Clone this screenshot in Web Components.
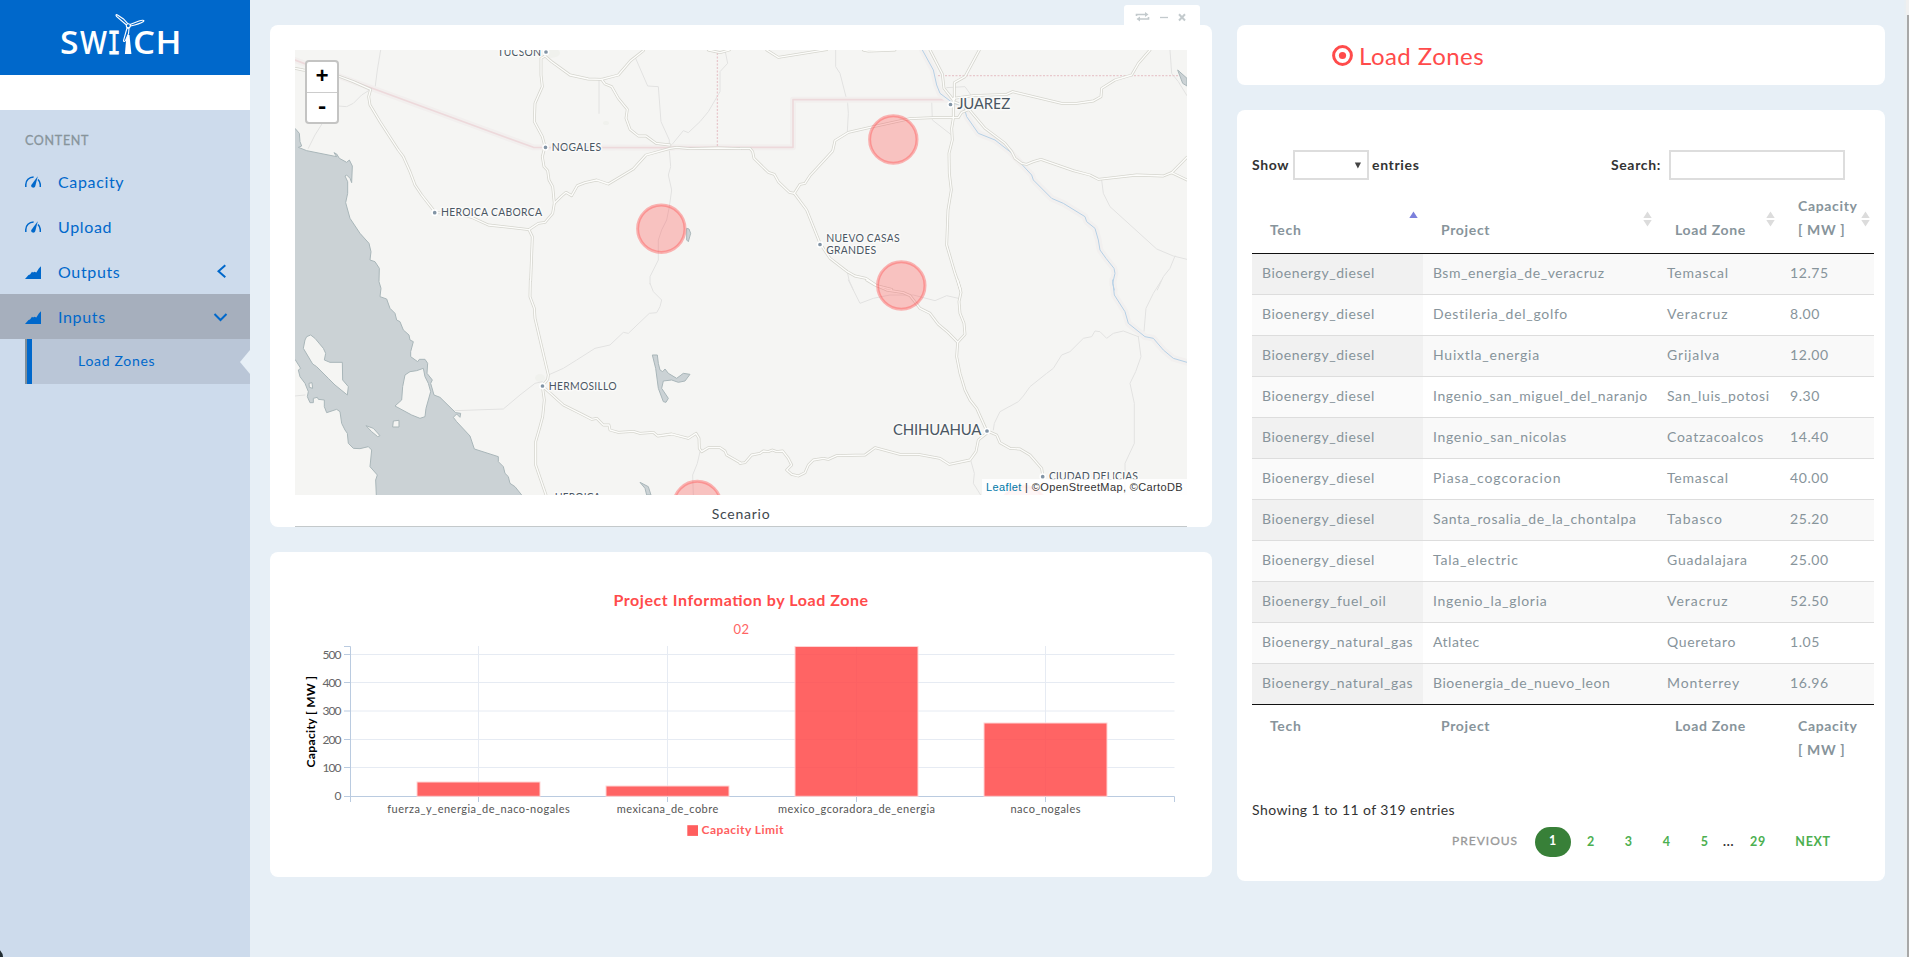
<!DOCTYPE html>
<html lang="en">
<head>
<meta charset="utf-8">
<title>Switch - Load Zones</title>
<style>
html,body{margin:0;height:100%;overflow:hidden}
body{background:#e7eff6;font-family:Lato,"Liberation Sans",sans-serif;font-size:14px;letter-spacing:.65px;color:#333b41}
</style>
</head>
<body>
<app-shell>
  <side-bar slot="side">
    <nav-item icon="gauge">Capacity</nav-item>
    <nav-item icon="gauge">Upload</nav-item>
    <nav-item icon="area" arrow="left">Outputs</nav-item>
    <nav-item icon="area" arrow="down" open>Inputs</nav-item>
    <sub-item>Load Zones</sub-item>
  </side-bar>
  <ui-card slot="left" style="height:502px"><card-tools slot="tools"></card-tools><zone-map></zone-map></ui-card>
  <ui-card slot="left" style="height:325px"><capacity-chart></capacity-chart></ui-card>
  <ui-card slot="right" style="height:60px"><page-title>Load Zones</page-title></ui-card>
  <ui-card slot="right" style="height:771px"><project-table></project-table></ui-card>
</app-shell>
<script>
function define(name, html, setup) {
  const t = document.createElement('template');
  t.innerHTML = html;
  customElements.define(name, class extends HTMLElement {
    connectedCallback() {
      if (this.shadowRoot) return;
      this.attachShadow({mode: 'open'}).appendChild(t.content.cloneNode(true));
      if (setup) setup(this, this.shadowRoot);
    }
  });
}

define('app-shell', `<style>
:host{display:grid;grid-template-columns:250px 942px 648px;height:957px;position:relative;overflow:hidden}
.l,.r{display:flex;flex-direction:column;gap:25px;padding-top:25px}
.l{margin-left:20px;width:942px}.r{margin-left:45px;width:648px}
.track{position:absolute;right:0;top:0;width:5px;height:957px;background:#e9eff3;z-index:3}
.track i{position:absolute;right:0;top:15px;width:2px;height:942px;background:#a8a8a8}
.track b{position:absolute;right:0;top:0;width:3px;height:15px;background:#f0f0f0}
.dot{position:absolute;left:-15px;top:948px;width:18px;height:18px;border-radius:9px;background:#222d32;z-index:3}
</style><slot name="side"></slot><div class="l"><slot name="left"></slot></div><div class="r"><slot name="right"></slot></div><div class="track"><i></i><b></b></div><div class="dot"></div>`);

define('side-bar', `<style>
:host{display:flex;flex-direction:column;background:#cddbec;height:957px}
.logo{height:75px;background:#0068cb;flex:none}
.gap{height:35px;background:#fff;flex:none}
.h{height:49px;box-sizing:border-box;padding:22px 0 0 25px;font-size:12.500px;line-height:18px;color:#87949b;letter-spacing:.7px;-webkit-text-stroke:.3px #87949b;flex:none}
svg{display:block}
</style>
<div class="logo"><svg width="250" height="75" viewBox="0 0 250 75" fill="#fff" font-weight="600" letter-spacing="0" font-family="'Open Sans',sans-serif" font-size="32">
<text x="60" y="54" textLength="18.500" lengthAdjust="spacingAndGlyphs">S</text>
<text x="80" y="54" textLength="27" lengthAdjust="spacingAndGlyphs">W</text>
<text x="107.500" y="54" font-family="'DejaVu Sans Mono',monospace" font-weight="400" font-size="31.500" stroke="#fff" stroke-width=".8" textLength="13" lengthAdjust="spacingAndGlyphs">I</text>
<text x="133" y="54" textLength="22" lengthAdjust="spacingAndGlyphs">C</text>
<text x="155.500" y="54" textLength="26" lengthAdjust="spacingAndGlyphs">H</text>
<path d="M126.500 35h3l1.900 19h-6.500z"/><path d="M124.500 39.500l2.500-2v3.500z" />
<g fill="#0068cb" stroke="#fff" stroke-width="1.100"><path d="M126.500 25l-10-8.500c-1-1.500-.5-2.500 1-1.500l6 4 4.500 5z"/><path d="M130 24.500l9-3.500c3-1 6-1 4.500.5-3 2-6 3-13 4.500z"/><path d="M127 28l-3.500 12.500c0 1.500 1.500 1 2 0l3-7 .5-5z"/><circle cx="128.300" cy="25.800" r="2"/></g></svg></div>
<div class="gap"></div><div class="h">CONTENT</div><slot></slot>`);

define('nav-item', `<style>
:host{display:flex;align-items:center;height:45px;flex:none;padding:0 22px 0 25px;color:#0068cb;font-size:16px;box-sizing:border-box}
:host([open]){background:#a6afbd}
.i{width:16px;height:16px;margin-right:17px}.t{flex:1;margin-top:-1px;letter-spacing:.65px}
svg{display:block}
</style><svg class="i" viewBox="0 0 16 16"></svg><span class="t"><slot></slot></span><svg class="a" width="15" height="15" fill="none" stroke="#0068cb" stroke-width="2"></svg>`, (h, r) => {
  r.querySelector('.i').innerHTML = h.getAttribute('icon') === 'gauge'
    ? '<path d="M.8 13V10.500C.8 6.500 4 3 8.600 2.900" fill="none" stroke="#0068cb" stroke-width="1.500"/><path d="M13 5.500c1.500 1.500 2.300 3.300 2.300 5.300V13" fill="none" stroke="#0068cb" stroke-width="1.500"/><path d="M12.800 2.300l-2.500 9.700c-.4 1.400-1.400 1.900-2.600 1.600-1.300-.4-1.900-1.500-1.400-2.600z" fill="#0068cb"/>'
    : '<path d="M0 15l3.500-4 1.500-.5 2-2.700 1 .8 1.500-.8 1.800.8 2.700-4.300L16 2.300V15z" fill="#0068cb"/>';
  const a = h.getAttribute('arrow');
  r.querySelector('.a').innerHTML = a === 'left' ? '<path d="M12.300 1.200L5.500 7.300l6.800 6"/>' : a ? '<path d="M1.500 5l6 6 6-6"/>' : '';
});

define('sub-item', `<style>
:host{display:flex;align-items:center;position:relative;height:45px;margin-left:25px;background:#bac6d7;border-left:2px solid #7f8d98;color:#0068cb;font-size:14px;flex:none;box-sizing:border-box}
b{width:5px;height:45px;background:#0068cb;margin-right:46px}
span{letter-spacing:.7px;margin-top:-3px}
i{position:absolute;right:0;top:11px;border:12px solid transparent;border-right:10px solid #e7eff6;border-left:0}
</style><b></b><span><slot></slot></span><i></i>`);

define('ui-card', `<style>
:host{display:block;position:relative;background:#fff;border-radius:8px;flex:none}
</style><slot name="tools"></slot><slot></slot>`);

define('card-tools', `<style>
:host{position:absolute;right:12px;top:-20px;width:76px;height:20px;background:#fff;border-radius:3px 3px 0 0}
svg{display:block}
</style><svg width="76" height="20" fill="none" stroke="#c3cacd" stroke-width="1.600"><path d="M12.500 11V9.500H22M24.500 12v2H15"/><path d="M21 7l3.500 2.500L21 12zM16 11.500L12.500 14l3.500 2.500z" fill="#c3cacd" stroke="none"/><path d="M36 12.500h8" stroke-width="1.300"/><path d="M55 9.300l6 6.200M61 9.300l-6 6.200" stroke-width="2"/></svg>`);

define('page-title', `<style>
:host{display:flex;align-items:center;height:60px;padding-left:95px;color:#ff4b4b;font-size:24px;gap:6px}
span{letter-spacing:.45px}svg{margin-top:2px}
</style><svg width="21" height="22"><circle cx="10.500" cy="10.500" r="8.900" fill="none" stroke="#ff4b4b" stroke-width="3"/><circle cx="10.500" cy="10.500" r="3.600" fill="#ff4b4b"/></svg><span><slot></slot></span>`);

/* Map geometry is kept in four survey sheets, three units to a pixel. */
const SHEETS = {A:[290,40],B:[740,0],C:[290,280],D:[740,280]};
const ROADS = {
A:['15,85 40,90 60,92 100,97 145,108 190,125 242,148 236,170 240,195 270,245 325,330 340,350 360,395 375,435 395,465 434,515','434,518 500,520 545,532 595,555 660,562 717,569','765,48 753,55 753,105 757,140 735,190 733,245 757,290 765,320 757,350 762,380 773,392 777,420 788,440 793,490 788,520 765,547 745,550 717,569 727,590 722,722','765,48 785,65 840,105 895,117 935,118 985,105 1022,62 1060,32','935,118 945,132 965,140 985,175 1012,208 1008,235 1020,268 1045,288 1068,288 1098,310 1140,315','793,490 815,468 828,457 845,467 862,437 885,428 920,420 955,432 1000,405 1030,387 1068,345 1140,325 1160,322 1200,326 1285,324 1352,326','1255,30 1290,38 1318,30'],
B:['0,445 30,445 38,455 42,475 85,517 103,523 115,545 148,577 163,580 180,553 195,550 210,527 278,453 285,422 325,397 400,380 510,356 580,353 655,353 665,337 690,327','163,580 200,630 240,730 270,775 322,815 345,828 378,835 410,857 455,868','80,150 115,172 260,149','370,150 385,153 465,150','570,150 607,222 612,265 640,300','718,150 675,230 643,248 643,300','640,295 700,287 800,283 818,275 880,290 965,310 1010,310 1060,303 1083,290 1085,265 1125,240 1175,225 1195,190 1230,150','640,305 680,320 735,385 795,430 815,455 825,475 845,490 860,493 880,485 903,478 1000,512 1050,525 1075,538 1190,525 1270,528 1295,518 1341,540','1295,518 1341,472','640,300 640,355 635,385 637,420 627,460 628,520 634,570 624,630 620,735 645,820 662,870'],
C:['721,0 720,50 733,85 735,115 775,285 773,298 757,318 763,360 758,410 750,440 737,485 737,555 768,645','757,318 820,375 870,400 905,418 920,415 940,435 957,435 960,450 985,457 1030,454 1050,460 1090,457 1103,468 1145,462 1195,475 1218,460 1227,475 1228,505 1235,515 1255,503 1290,503 1305,513 1310,525 1345,545 1352,549'],
D:['380,0 405,15 440,30 490,38 510,47 540,85 570,100 595,133 625,158 653,187','653,0 663,37 657,65 660,100 672,130 675,163 653,187 650,230 660,280 675,330 690,360 710,385 740,452','740,452 770,465 780,488 810,505 840,507 870,525 905,565 908,585','0,550 15,548 35,525 60,520 70,513 85,515 97,510 110,515 128,513 145,535 155,555 140,570 155,583 175,588 195,578 205,555 220,540 250,535 265,538 290,527 375,525 405,503 480,523 535,523 600,535 628,553 690,540 708,515 715,480 740,460']};
const MINOR = {
A:['272,30 262,90 255,145','242,148 215,165 190,190 170,200 145,198','97,250 75,285 55,325','927,120 927,220','1037,55 1073,138 1105,140 1113,245 1138,300 1138,330 1142,380 1135,405 1145,450 1138,500 1130,540 1115,570 1105,600 1105,660 1080,710 1080,732','1145,315 1180,272 1195,278 1230,245 1255,215 1290,155 1290,95 1313,70 1305,30'],
B:['287,150 287,200 300,220 323,310 325,340 322,395','575,300 577,360 632,403','620,263 675,260 700,295','1290,150 1295,220 1315,245 1341,287','1085,540 1090,580 1110,620 1250,747 1300,768 1341,778','1305,768 1290,805 1270,830 1252,870','322,815 327,840 340,870'],
C:['1080,10 1090,35 1115,60 1110,80 1100,98 1078,100 1015,160 1000,157 960,195 915,205 860,240 820,265 775,285','495,392 640,387 690,345 735,310 757,305','15,348 45,345','1230,515 1222,550 1208,585 1210,645'],
D:['1265,0 1240,40 1218,85 1212,155 1195,170 1203,230 1187,275 1170,310 1183,370 1183,490 1155,550 1155,645','760,450 763,430 780,395 835,365 850,348 870,320 920,280 940,265 965,225 990,215 1030,175 1055,170 1065,153 1080,155 1100,175 1120,160 1150,153 1195,170','692,540 703,580 700,610 722,645','325,0 360,70 400,55 450,45 520,45 585,62 620,47 655,55']};
const RIVER = {B:['547,150 580,210 590,255 600,280 640,310 660,315 672,320 680,350 715,400 765,420 810,455 875,525 880,540 935,595 970,610 1035,650 1040,665 1065,685 1075,720 1080,750 1098,775 1122,805 1125,820 1118,850 1123,870'],D:['1118,0 1123,45 1155,95 1165,130 1215,170 1240,175 1270,210 1300,235 1341,247']};
const BORDER = {A:['15,60 145,108 255,148 730,322 1150,323'],B:['-210,442 159,442 159,299 625,299']};
const WATER = {
C:['15,-455 28,-440 30,-415 35,-402 25,-398 50,-388 140,-370 132,-382 140,-378 148,-365 170,-353 178,-360 187,-342 185,-292 180,-305 170,-315 165,-312 173,-295 173,-260 167,-232 180,-185 210,-140 237,-110 243,-85 240,-60 255,-55 268,-35 267,5 273,25 270,50 290,57 300,85 315,100 320,120 330,125 340,150 357,165 360,180 370,185 362,215 362,230 383,245 388,238 405,238 413,250 411,280 427,300 422,310 432,345 450,352 497,398 512,400 510,412 500,402 490,412 500,425 540,468 553,507 625,530 625,545 640,560 645,580 655,590 660,610 675,620 695,645 700,670 260,670 257,600 262,585 240,560 245,510 235,500 210,506 190,505 175,490 172,460 165,450 155,430 150,395 140,388 110,398 103,380 103,360 85,358 82,352 70,355 70,368 60,368 52,350 55,335 45,310 30,290 25,270 32,265 15,238 -10,238 -10,-455','1087,225 1102,225 1105,250 1110,270 1118,275 1125,267 1135,280 1160,295 1180,280 1200,283 1185,303 1165,307 1145,300 1120,303 1115,325 1135,355 1128,367 1120,365 1105,325 1097,265','1050,607 1075,620 1083,645 1070,645 1065,625'],
B:['1313,210 1341,235 1341,258 1328,250'],A:['1190,565 1197,567 1202,580 1195,605 1190,600']};
const ISLES = {C:['45,180 50,170 62,165 75,175 100,205 107,220 103,240 120,247 157,247 158,300 175,320 172,345 135,315 115,295 80,260 68,252 40,205','345,285 360,275 380,272 400,265 405,290 415,310 422,335 408,385 405,410 390,415 365,405 315,378 335,360 338,320','310,423 327,421 327,441 308,441','228,437 250,445 270,467 263,470 245,455','57,310 66,308 68,325 58,322']};
const layer = (set, attrs, tag = 'polyline') => Object.entries(set).map(([k, list]) =>
  `<g transform="translate(${SHEETS[k]}) scale(.33333)" ${attrs}>${list.map(p => `<${tag} points="${p}"/>`).join('')}</g>`).join('');
const TOWNS = [['TUCSON',497.5,55.5,43.5,10.5,546,52],['NOGALES',551.7,150.7,49.5,10.5,545.5,147.3],['HEROICA CABORCA',441,216,101,10.5,434.7,212.7],['JUAREZ',957.3,109.2,53,15,950.5,104.5],['NUEVO CASAS',826.3,242,73.4,10.5,820,244.5],['GRANDES',826.3,254,50,10.5],['HERMOSILLO',548.7,389.5,68,10.5,542.5,386],['CHIHUAHUA',893,435.4,88.5,15,987,431],['CIUDAD DELICIAS',1049,480,89,10.5,1042.7,476.7],['HEROICA',554.7,500.5,46,10.5]];

define('zone-map', `<style>
:host{display:block;padding:25px 25px 0;font-size:14px;color:#3f484e}
.map{position:relative;height:445px;background:#f5f5f3;overflow:hidden}
svg{display:block}
.zoom{position:absolute;left:10px;top:10px;width:30px;border:2px solid #c4c4c3;border-radius:4px;background:#fff;font:700 22px/30px "Liberation Mono",monospace;color:#000;text-align:center;letter-spacing:0}
.zoom div{height:30px;line-height:31px}.zoom div+div{border-top:1px solid #ccc;line-height:30px;height:29px}
.attr{position:absolute;right:0;bottom:0;height:16px;width:205px;box-sizing:border-box;padding-left:4px;background:rgba(255,255,255,.85);font:11px/16px "Liberation Sans",sans-serif;letter-spacing:.38px;color:#333;white-space:nowrap}
.attr a{color:#0078a8}
.cap{height:32px;box-sizing:border-box;line-height:38px;text-align:center;border-bottom:1px solid #c4c9cb;letter-spacing:.75px}
</style><div class="map"><svg width="892" height="445" viewBox="295 50 892 445"></svg><div class="zoom"><div>+</div><div>-</div></div><div class="attr"><a>Leaflet</a> | ©OpenStreetMap, ©CartoDB</div></div><div class="cap">Scenario</div>`, (h, r) => {
  const ln = 'fill="none" stroke-linejoin="round" stroke-linecap="round"';
  r.querySelector('svg').innerHTML =
    '<g fill="#f0f1ed"><ellipse cx="551" cy="53" rx="9" ry="5"/><ellipse cx="540" cy="378" rx="5" ry="4"/><ellipse cx="606" cy="123" rx="3" ry="2"/></g>' +
    layer(WATER, 'fill="#cbd2d5" stroke="#a9b6b9" stroke-width="3" stroke-linejoin="round"', 'polygon') +
    layer(ISLES, 'fill="#f5f5f3" stroke="#a9b6b9" stroke-width="3" stroke-linejoin="round"', 'polygon') +
    layer(MINOR, ln + ' stroke="#e2e2e1" stroke-width="3"') +
    layer(BORDER, ln + ' stroke="#f2efee" stroke-width="18"') +
    layer(BORDER, ln + ' stroke="#edd9db" stroke-width="5"') +
    '<path d="M717.400 53V146M938 75.700H1179" fill="none" stroke="#e8c8cc" stroke-width="1.300" stroke-dasharray="2 1.500"/>' +
    layer(RIVER, ln + ' stroke="#f2f0ef" stroke-width="20"') + layer(RIVER, ln + ' stroke="#b5d0e6" stroke-width="3"') +
    layer(ROADS, ln + ' stroke="#d5d5ce" stroke-width="8.500"') + layer(ROADS, ln + ' stroke="#fdfdfb" stroke-width="4"') +
    TOWNS.map(([t, x, y, w, s, cx, cy]) => `<text x="${x}" y="${y}" textLength="${w}" font-size="${s}" letter-spacing="0" fill="#4b5763" stroke="#fafaf9" stroke-width="3" paint-order="stroke" stroke-linejoin="round">${t}</text>` + (cx ? `<circle cx="${cx}" cy="${cy}" r="2.600" fill="#8294a5" stroke="#fff" stroke-width="1.500"/>` : '')).join('') +
    [[661.3,228.7],[893.3,139.5],[901.3,285.5],[697.3,505],[1023.7,510]].map(([x, y]) => `<circle cx="${x}" cy="${y}" r="23.700" fill="#ff4b4b" fill-opacity=".3" stroke="#ff4b4b" stroke-opacity=".4" stroke-width="3"/>`).join('');
});

define('capacity-chart', `<style>:host{display:block}svg{display:block}</style><svg width="942" height="325" viewBox="270 552 942 325" font-size="12" letter-spacing="0"></svg>`, (h, r) => {
  let s = '<g stroke="#e6ebf3" stroke-width="1">';
  for (const y of [654.5,682.5,711,739.5,767.5]) s += `<path d="M351 ${y}H1174.500"/>`;
  const cats = [['fuerza_y_energia_de_naco-nogales',478.5,182.5,782],['mexicana_de_cobre',667.5,101.5,786],['mexico_gcoradora_de_energia',856.5,157,646.5],['naco_nogales',1045.5,70,723]];
  for (const c of cats) s += `<path d="M${c[1]} 646V796"/>`;
  s += '</g><g stroke="#bacbe0" fill="none"><path d="M344 646.500H350.500V796.500M344 796.500H1174.500V802M350.500 796V802"/>';
  for (const y of [654.5,682.5,711,739.5,767.5]) s += `<path d="M344 ${y}h6"/>`;
  for (const c of cats) s += `<path d="M${c[1]} 796v6"/>`;
  s += '</g>';
  for (const [n, x, w, y] of cats) s += `<rect x="${x - 61.5}" y="${y}" width="123" height="${796.3 - y}" fill="#ff4b4b" fill-opacity=".86" stroke="#ffd5d5" stroke-width="1"/><text x="${x - w / 2}" y="813.200" font-size="11" textLength="${w}" fill="#555">${n}</text>`;
  [[500,658.5],[400,686.5],[300,715],[200,743.5],[100,771.5]].forEach(([v, y]) => s += `<text x="322.500" y="${y}" textLength="19" fill="#666">${v}</text>`);
  s += `<text x="334.500" y="800.300" fill="#666">0</text>
<text x="613.500" y="606" font-size="16" font-weight="700" fill="#ff4b4b" textLength="254.500">Project Information by Load Zone</text>
<text x="733.500" y="634" textLength="15.500" font-size="13" fill="#ff6464">02</text>
<text transform="translate(315 767.500) rotate(-90)" font-weight="700" fill="#000" textLength="91.500">Capacity [ MW ]</text>
<rect x="687.300" y="825.200" width="10.700" height="10.700" fill="#ff5e5e"/><text x="701.500" y="834" font-weight="700" fill="#ff5e5e" textLength="82">Capacity Limit</text>`;
  r.querySelector('svg').innerHTML = s;
});

define('pager-bar', `<style>
:host{display:flex;align-items:center;height:30px;font-size:12.500px;font-weight:700;color:#4caf50;letter-spacing:.7px;margin-left:200px}
span{width:37.900px;text-align:center;margin-top:-2px}
.p{width:68px;text-align:left;color:#999;font-weight:400;-webkit-text-stroke:.3px #999;margin-right:15px;margin-top:-3px;font-size:12px;letter-spacing:1px;white-space:nowrap}
.on{width:36px;height:30px;line-height:28px;border-radius:15px;background:#388038;color:#fff;margin:0 1px 0 0}
.e{width:11px;color:#333;margin-left:-.5px}.w{width:48px}.n{width:50px;margin-left:6px}
</style><span class="p">PREVIOUS</span><span class="on">1</span><span>2</span><span>3</span><span>4</span><span>5</span><span class="e">...</span><span class="w">29</span><span class="n">NEXT</span>`);

define('project-table', `<style>
:host{display:block;padding:40px 11px 0 15px}
.ctl{display:flex;align-items:center;height:30px;font-weight:700;color:#333}
.ctl span{margin-top:-2px}
.ctl .sp{flex:1}
.sel,.inp{box-sizing:border-box;height:30px;border:2px solid #ddd;background:#fff}
.show{width:37px}
.sel{width:76px;margin:0 3px 0 4px;display:flex;align-items:center;justify-content:flex-end;padding-right:5.500px}
.inp{width:176px;margin:0 29px 0 8px}
.row{display:grid;grid-template-columns:171px 234px 123px 94px}
.head{height:73px;border-bottom:1px solid #111;font-weight:700;color:#87949b;line-height:24px;align-items:end}
.head div,.foot div{padding:0 0 11px 18px;position:relative;letter-spacing:.65px}
.head svg{position:absolute;right:5px;top:-7px}
.head div:last-child svg{top:17px;right:4px}
.body .row{height:40px;line-height:37px;border-bottom:1px solid #ddd;color:#87949b}
.body .row div{padding-left:10px;white-space:nowrap}
.body .row:last-child{border-bottom-color:#111}
.body .row div:first-child{background:#fafafa}
.body .row:nth-child(odd){background:#f9f9f9}
.body .row:nth-child(odd) div:first-child{background:#f1f1f1}
.foot{padding-top:9px;height:80px;font-weight:700;color:#87949b;line-height:24px}
.info{height:30px;line-height:32px;color:#333;letter-spacing:.43px}
pager-bar{margin-top:3px}
</style>
<div class="ctl"><span class="show">Show</span><div class="sel"><svg width="8" height="7"><path d="M.8.500h6.200L3.900 6.500z" fill="#444"/></svg></div><span>entries</span><span class="sp"></span><span>Search:</span><div class="inp"></div></div>
<div class="row head"></div><div class="body"></div><div class="row foot"></div>
<div class="info">Showing 1 to 11 of 319 entries</div><pager-bar></pager-bar>`, (h, r) => {
  const cols = ['Tech', 'Project', 'Load Zone', 'Capacity<br>[ MW ]'];
  r.querySelector('.head').innerHTML = cols.map((c, i) => `<div>${c}<svg width="9" height="16">${i ? '<path d="M.3 7L4.500.500 8.700 7zM.3 9h8.400L4.500 15.500z" fill="#dcdcdc"/>' : '<path d="M.3 7L4.500.500 8.700 7z" fill="#7b80dc"/>'}</svg></div>`).join('');
  r.querySelector('.foot').innerHTML = cols.map(c => `<div>${c}</div>`).join('');
  const d = 'Bioenergy_diesel', g = 'Bioenergy_natural_gas';
  /* each row: the four cells, then the tracking of its first three */
  r.querySelector('.body').innerHTML = [
    [d,'Bsm_energia_de_veracruz','Temascal','12.75',.55,.58,.8],
    [d,'Destileria_del_golfo','Veracruz','8.00',.55,.7,1],
    [d,'Huixtla_energia','Grijalva','12.00',.55,.76,.85],
    [d,'Ingenio_san_miguel_del_naranjo','San_luis_potosi','9.30',.55,.6,.6],
    [d,'Ingenio_san_nicolas','Coatzacoalcos','14.40',.55,.68,.72],
    [d,'Piasa_cogcoracion','Temascal','40.00',.55,.97,.8],
    [d,'Santa_rosalia_de_la_chontalpa','Tabasco','25.20',.55,.64,1],
    [d,'Tala_electric','Guadalajara','25.00',.55,.8,.78],
    ['Bioenergy_fuel_oil','Ingenio_la_gloria','Veracruz','52.50',.63,.71,1],
    [g,'Atlatec','Queretaro','1.05',.62,.5,.65],
    [g,'Bioenergia_de_nuevo_leon','Monterrey','16.96',.62,.55,.87]
  ].map(x => `<div class="row">${x.slice(0, 4).map((c, i) => `<div style="letter-spacing:${x[i + 4] || .6}px">${c}</div>`).join('')}</div>`).join('');
});
</script>
</body>
</html>
